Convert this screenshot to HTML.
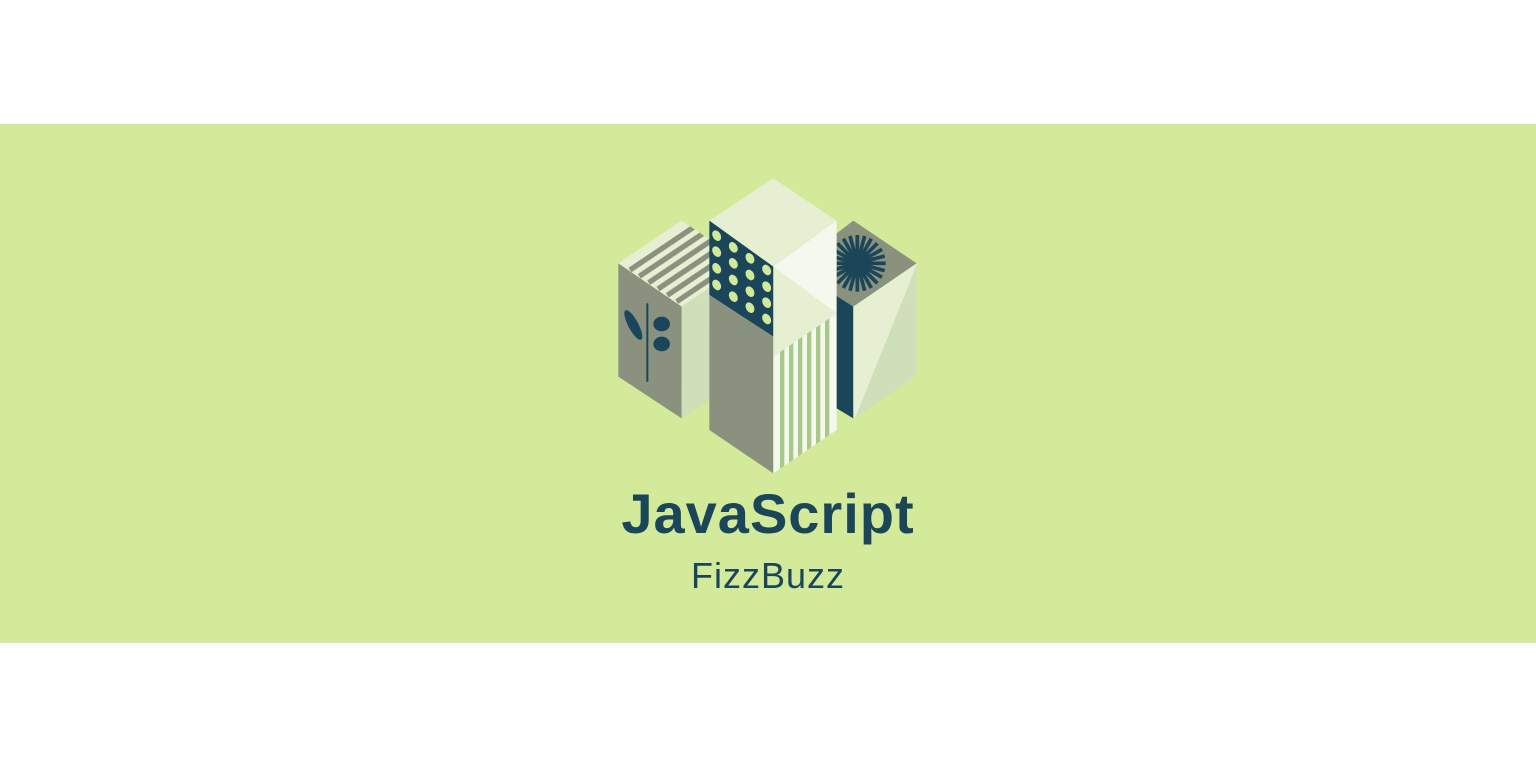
<!DOCTYPE html>
<html><head><meta charset="utf-8"><style>
html,body{margin:0;padding:0;background:#fff;width:1536px;height:768px;overflow:hidden;position:relative}
.band{position:absolute;left:0;top:124px;width:1536px;height:519px;background:#d3ea9b}
svg{position:absolute;left:610px;top:170px}
.t1{position:absolute;left:0;width:1536px;text-align:center;top:481px;font:bold 56px "Liberation Sans",sans-serif;color:#1b4659;letter-spacing:1px}
.t2{position:absolute;left:0;width:1536px;text-align:center;top:555px;font:36px "Liberation Sans",sans-serif;color:#1b4659;letter-spacing:1px}
</style></head><body>
<div class="band"></div>
<svg width="320" height="310" viewBox="0 0 960 930">
<defs>
<clipPath id="ltop"><polygon points="25,280 215,152 405,280 215,410"/></clipPath>
<clipPath id="mnavy"><polygon points="298,152 490,290 490,500 298,375"/></clipPath>
<clipPath id="mstr"><polygon points="490,560 680,430 680,780 490,910"/></clipPath>
<clipPath id="rtop"><polygon points="680,190 730,152 920,280 730,410 680,378"/></clipPath>
</defs>
<polygon points="25,280 215,152 405,280 215,410" fill="#e6efd2"/>
<g clip-path="url(#ltop)" stroke="#8a917e" stroke-width="16">
<line x1="60" y1="300" x2="280" y2="152"/>
<line x1="88" y1="319" x2="308" y2="171"/>
<line x1="116" y1="338" x2="336" y2="190"/>
<line x1="144" y1="357" x2="364" y2="209"/>
<line x1="172" y1="376" x2="392" y2="228"/>
<line x1="200" y1="395" x2="420" y2="247"/>
</g>
<polygon points="25,280 215,410 215,745 25,620" fill="#8a917e"/>
<polygon points="215,410 405,280 405,615 215,745" fill="#cfdfb9"/>
<ellipse cx="70" cy="465" rx="15" ry="50" transform="rotate(-28 70 465)" fill="#1b4659"/>
<rect x="109" y="400" width="6" height="235" fill="#1b4659"/>
<ellipse cx="155" cy="462" rx="25" ry="22" fill="#1b4659"/>
<ellipse cx="155" cy="522" rx="25" ry="22" fill="#1b4659"/>
<polygon points="298,152 490,25 680,152 490,290" fill="#e6efd2"/>
<polygon points="298,152 490,290 490,500 298,375" fill="#1b4659"/>
<g clip-path="url(#mnavy)" fill="#d2e99c">
<ellipse cx="320" cy="197" rx="12" ry="17" transform="rotate(-30 320 197)"/>
<ellipse cx="320" cy="245" rx="12" ry="17" transform="rotate(-30 320 245)"/>
<ellipse cx="320" cy="295" rx="12" ry="17" transform="rotate(-30 320 295)"/>
<ellipse cx="320" cy="345" rx="12" ry="17" transform="rotate(-30 320 345)"/>
<ellipse cx="370" cy="232" rx="12" ry="17" transform="rotate(-30 370 232)"/>
<ellipse cx="370" cy="280" rx="12" ry="17" transform="rotate(-30 370 280)"/>
<ellipse cx="370" cy="330" rx="12" ry="17" transform="rotate(-30 370 330)"/>
<ellipse cx="370" cy="380" rx="12" ry="17" transform="rotate(-30 370 380)"/>
<ellipse cx="420" cy="265" rx="12" ry="17" transform="rotate(-30 420 265)"/>
<ellipse cx="420" cy="315" rx="12" ry="17" transform="rotate(-30 420 315)"/>
<ellipse cx="420" cy="365" rx="12" ry="17" transform="rotate(-30 420 365)"/>
<ellipse cx="420" cy="413" rx="12" ry="17" transform="rotate(-30 420 413)"/>
<ellipse cx="470" cy="300" rx="12" ry="17" transform="rotate(-30 470 300)"/>
<ellipse cx="470" cy="350" rx="12" ry="17" transform="rotate(-30 470 350)"/>
<ellipse cx="470" cy="398" rx="12" ry="17" transform="rotate(-30 470 398)"/>
<ellipse cx="470" cy="447" rx="12" ry="17" transform="rotate(-30 470 447)"/>
</g>
<polygon points="298,375 490,500 490,910 298,780" fill="#8a917e"/>
<polygon points="490,290 680,152 680,430" fill="#f5f8ec"/>
<polygon points="490,290 680,430 490,560" fill="#e6efd2"/>
<polygon points="490,560 680,430 680,780 490,910" fill="#f5f8ec"/>
<g clip-path="url(#mstr)" fill="#a9c98a">
<rect x="510" y="400" width="13" height="520"/>
<rect x="537" y="400" width="13" height="520"/>
<rect x="564" y="400" width="13" height="520"/>
<rect x="591" y="400" width="13" height="520"/>
<rect x="618" y="400" width="13" height="520"/>
<rect x="645" y="400" width="13" height="520"/>
</g>
<polygon points="680,190 730,152 920,280 730,410 680,378" fill="#8a917e"/>
<g clip-path="url(#rtop)">
<circle cx="742" cy="280" r="42" fill="#1b4659"/>
<g stroke="#1b4659" stroke-width="11" transform="translate(-18 0)">
<line x1="760" y1="280" x2="845" y2="280"/>
<line x1="760" y1="280" x2="842" y2="302"/>
<line x1="760" y1="280" x2="834" y2="322"/>
<line x1="760" y1="280" x2="820" y2="340"/>
<line x1="760" y1="280" x2="802" y2="354"/>
<line x1="760" y1="280" x2="782" y2="362"/>
<line x1="760" y1="280" x2="760" y2="365"/>
<line x1="760" y1="280" x2="738" y2="362"/>
<line x1="760" y1="280" x2="718" y2="354"/>
<line x1="760" y1="280" x2="700" y2="340"/>
<line x1="760" y1="280" x2="686" y2="322"/>
<line x1="760" y1="280" x2="678" y2="302"/>
<line x1="760" y1="280" x2="675" y2="280"/>
<line x1="760" y1="280" x2="678" y2="258"/>
<line x1="760" y1="280" x2="686" y2="238"/>
<line x1="760" y1="280" x2="700" y2="220"/>
<line x1="760" y1="280" x2="718" y2="206"/>
<line x1="760" y1="280" x2="738" y2="198"/>
<line x1="760" y1="280" x2="760" y2="195"/>
<line x1="760" y1="280" x2="782" y2="198"/>
<line x1="760" y1="280" x2="802" y2="206"/>
<line x1="760" y1="280" x2="820" y2="220"/>
<line x1="760" y1="280" x2="834" y2="238"/>
<line x1="760" y1="280" x2="842" y2="258"/>
</g>
</g>
<polygon points="680,378 730,410 730,745 680,715" fill="#1b4659"/>
<polygon points="730,410 920,280 920,615 730,745" fill="#e6efd2"/>
<polygon points="920,285 920,615 735,745" fill="#cfdfb9"/>
</svg>
<div class="t1">JavaScript</div>
<div class="t2">FizzBuzz</div>
</body></html>
